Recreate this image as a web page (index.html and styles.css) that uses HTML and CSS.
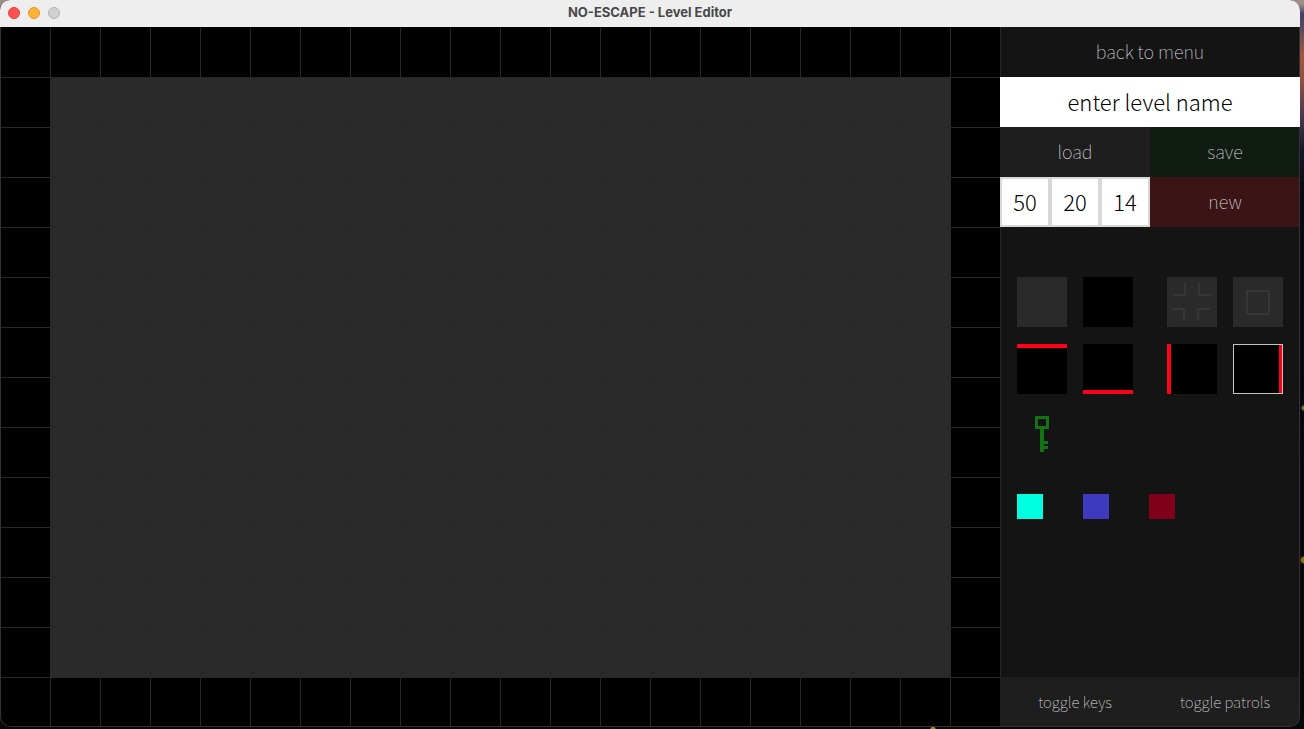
FILE: index.html
```html
<!DOCTYPE html>
<html lang="en">
<head>
<meta charset="utf-8">
<title>NO-ESCAPE - Level Editor</title>
<link rel="stylesheet" href="styles.css">
</head>
<body>
<div class="window">
  <header class="titlebar">
    <div class="lights">
      <button class="light close" aria-label="Close"></button>
      <button class="light minimize" aria-label="Minimize"></button>
      <button class="light zoom" aria-label="Zoom" disabled></button>
    </div>
    <h1 class="title">NO-ESCAPE - Level Editor</h1>
    <div></div>
  </header>
  <div class="editor">
    <main class="canvas"><div class="board"></div></main>
    <aside class="sidebar">
      <button class="btn menu">back to menu</button>
      <input class="field name" type="text" aria-label="Level name" value="enter level name">
      <div class="pair">
        <button class="btn load">load</button>
        <button class="btn save">save</button>
      </div>
      <div class="pair">
        <div class="sizes">
          <input class="field number" type="text" aria-label="Tile size" value="50">
          <input class="field number" type="text" aria-label="Columns" value="20">
          <input class="field number" type="text" aria-label="Rows" value="14">
        </div>
        <button class="btn new">new</button>
      </div>
      <div class="palette">
        <div class="tiles">
          <div class="group">
            <button class="tile floor" aria-label="Floor"></button>
            <button class="tile" aria-label="Void"></button>
            <button class="tile top" aria-label="Laser top"></button>
            <button class="tile bottom" aria-label="Laser bottom"></button>
          </div>
          <div class="group">
            <button class="tile floor" aria-label="Start">
              <svg width="50" height="50" viewBox="0 0 50 50" fill="none" stroke="#363636" stroke-width="2"><path d="M18 6V18H6M32 6V18H44M5 32H17V44M43 32H31V44"/></svg>
            </button>
            <button class="tile floor" aria-label="Exit">
              <svg width="50" height="50" viewBox="0 0 50 50" fill="none" stroke="#363636" stroke-width="2"><path d="M14 14H36V37H14Z"/></svg>
            </button>
            <button class="tile left" aria-label="Laser left"></button>
            <button class="tile right selected" aria-label="Laser right"></button>
          </div>
        </div>
        <button class="tile key" aria-label="Key">
          <svg width="50" height="50" viewBox="0 0 50 50" fill="#147314" shape-rendering="crispEdges"><path fill-rule="evenodd" d="M18 5H32V18H18ZM21 8V15H29V8Z"/><path d="M23 18H27V30H31V33H27V35H31V38H27V41H23Z"/></svg>
        </button>
        <div class="swatches">
          <button class="swatch cyan" aria-label="Cyan"></button>
          <button class="swatch blue" aria-label="Blue"></button>
          <button class="swatch red" aria-label="Red"></button>
        </div>
      </div>
      <div class="pair toggles">
        <button class="btn toggle">toggle keys</button>
        <button class="btn toggle">toggle patrols</button>
      </div>
    </aside>
  </div>
</div>
</body>
</html>
```
FILE: styles.css
```css
* { box-sizing: border-box; }

body {
  margin: 0;
  min-height: 100vh;
  padding: 0 4px 2px 0;
  display: flex;
  background:
    radial-gradient(circle at 100% 408px, #77753a 0 2px, transparent 3px),
    radial-gradient(circle at 100% 560px, #8a6a20 0 3px, transparent 4px),
    radial-gradient(circle at 933px 100%, #9a8c28 0 2px, transparent 3px),
    linear-gradient(#a18c88 0 4px, #3f4266 14px, #5a4a60 28px, #a0583f 55px, #8d5143 80px, #4b3a50 115px, #17182a 150px, #0a0b10 190px, #07080c);
  font-family: "Noto Sans CJK SC", "Noto Sans", sans-serif;
  font-weight: 100;
}

button, input {
  margin: 0;
  border: 0;
  padding: 0;
  border-radius: 0;
  font: inherit;
}

.window {
  position: relative;
  flex: 1;
  display: flex;
  flex-direction: column;
  overflow: hidden;
  border-radius: 10px;
  background: #000;
}

.window::after {
  content: "";
  position: absolute;
  inset: 27px 0 0;
  border: 1px solid #333;
  border-top: 0;
  border-radius: 0 0 10px 10px;
  pointer-events: none;
}

.titlebar {
  height: 27px;
  padding-bottom: 1px;
  display: grid;
  grid-template-columns: 1fr auto 1fr;
  align-items: center;
  background: #eee;
}

.lights { display: flex; gap: 8px; padding-left: 8px; }
.light { width: 12px; height: 12px; border-radius: 50%; border: 1px solid; }
.close { background: #ff5150; border-color: #e0403f; }
.minimize { background: #ffb339; border-color: #dc962a; }
.zoom { background: #d0d0d0; border-color: #b2b2b2; }

.title {
  margin: 0;
  padding-bottom: 2px;
  font: 700 13px/14px Inter, sans-serif;
  color: #484848;
}

.editor { flex: 1; display: flex; }

.canvas {
  --line: #282828;
  flex: 1;
  display: flex;
  padding: 49px 49px 50px 50px;
  border-top: 1px solid #000;
  background:
    linear-gradient(90deg, var(--line) 1px, transparent 1px) 0 0 / 50px 50px border-box,
    linear-gradient(var(--line) 1px, transparent 1px) 0 0 / 50px 50px border-box,
    #000;
}

.board {
  flex: 1;
  background:
    linear-gradient(90deg, #282828 1px, transparent 1px) 0 0 / 50px 50px,
    linear-gradient(#282828 1px, transparent 1px) 0 0 / 50px 50px,
    #2a2a2a;
}

.sidebar {
  width: 300px;
  display: flex;
  flex-direction: column;
  background: linear-gradient(90deg, #242424 1px, #141414 1px);
}

.btn {
  height: 50px;
  padding-bottom: 2px;
  font-size: 18px;
  line-height: 24px;
  color: #d8d8d8;
  background: none;
}

.field {
  width: 100%;
  height: 50px;
  min-width: 0;
  padding-bottom: 2px;
  font-size: 22px;
  font-weight: 300;
  text-align: center;
  color: #000;
  background: #fff;
}

.name { position: relative; z-index: 1; }
.pair { display: grid; grid-template-columns: 1fr 1fr; }
.load { background: #1e1e1e; }
.save { background: #101c11; }
.new { background: #3b1415; }
.sizes { position: relative; z-index: 1; display: grid; grid-template-columns: repeat(3, 1fr); }
.number { border: 2px solid #d8d8d8; }

.palette { flex: 1; padding: 50px 17px; }
.tiles { display: flex; justify-content: space-between; }
.group { display: grid; grid-template-columns: 50px 50px; gap: 17px 16px; }

.tile {
  position: relative;
  display: block;
  width: 50px;
  height: 50px;
  background: #000;
}
.tile svg { display: block; }
.floor { background: #2a2a2a; }
.top { border-top: 4px solid #ff0018; }
.bottom { border-bottom: 4px solid #ff0018; }
.left { border-left: 4px solid #ff0018; }
.right { border-right: 4px solid #ff0018; }
.selected::after {
  content: "";
  position: absolute;
  inset: 0 -4px 0 0;
  border: 1px solid #c4c4c4;
}
.key { margin-top: 17px; background: none; }

.swatches { display: flex; gap: 40px; margin-top: 33px; }
.swatch { width: 26px; height: 25px; }
.cyan { background: #00ffe1; }
.blue { background: #3d3abf; }
.red { background: #80001a; }

.toggles { background: #1e1e1e; }
.toggle { padding-bottom: 0; font-size: 15px; }
```
